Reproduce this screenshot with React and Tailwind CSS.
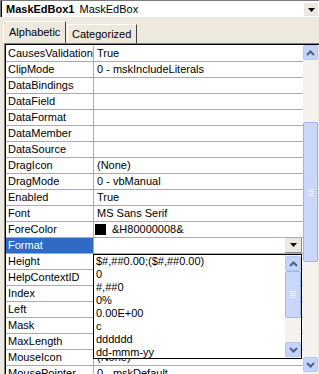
const rows = [
  ["CausesValidation", "True"],
  ["ClipMode", "0 - mskIncludeLiterals"],
  ["DataBindings", ""],
  ["DataField", ""],
  ["DataFormat", ""],
  ["DataMember", ""],
  ["DataSource", ""],
  ["DragIcon", "(None)"],
  ["DragMode", "0 - vbManual"],
  ["Enabled", "True"],
  ["Font", "MS Sans Serif"],
  ["ForeColor", "&H80000008&"],
  ["Format", ""],
  ["Height", ""],
  ["HelpContextID", ""],
  ["Index", ""],
  ["Left", ""],
  ["Mask", ""],
  ["MaxLength", ""],
  ["MouseIcon", "(None)"],
  ["MousePointer", "0 - mskDefault"],
];

const formats = [
  "$#,##0.00;($#,##0.00)",
  "0",
  "#,##0",
  "0%",
  "0.00E+00",
  "c",
  "dddddd",
  "dd-mmm-yy",
];

function DownTriangle() {
  return (
    <svg width="7" height="4" viewBox="0 0 7 4">
      <path d="M0 0h7L3.5 4z" fill="#000" />
    </svg>
  );
}

function Chevron({ up }) {
  return (
    <svg width="9" height="6" viewBox="0 0 9 6">
      <path
        d={up ? "M1 5L4.5 1.5 8 5" : "M1 1l3.5 3.5L8 1"}
        fill="none"
        stroke="#4d6185"
        strokeWidth="2"
      />
    </svg>
  );
}

function ScrollButton({ up, className = "" }) {
  return (
    <div
      className={`h-[15px] shrink-0 flex items-center justify-center rounded-[2px] border border-[#b4c8f6] bg-[#c4d4fc] ${className}`}
    >
      <Chevron up={up} />
    </div>
  );
}

function Thumb({ className = "" }) {
  return (
    <div
      className={`shrink-0 flex flex-col items-center justify-center gap-[1px] rounded-[2px] border border-[#9fb6ea] bg-[#c9d7fb] ${className}`}
    >
      <div className="w-[6px] h-[1px] bg-[#eef2fd]" />
      <div className="w-[6px] h-[1px] bg-[#eef2fd]" />
      <div className="w-[6px] h-[1px] bg-[#eef2fd]" />
      <div className="w-[6px] h-[1px] bg-[#eef2fd]" />
    </div>
  );
}

export default function App() {
  return (
    <div className="w-[319px] h-[374px] overflow-hidden bg-[#eee9df] text-[11px] text-black font-['Liberation_Sans',Arial,sans-serif] flex flex-col">
      {/* object combo */}
      <div className="h-[17px] shrink-0 flex border-t border-l border-[#7a7a7a] bg-white">
        <div className="flex-1 flex items-center border-l border-black pl-[4px] leading-none">
          <span className="font-bold">MaskEdBox1</span>
          <span className="ml-[5px]">MaskEdBox</span>
        </div>
        <div className="w-[14px] h-[13px] mt-[2px] mr-[1px] flex items-center justify-center bg-[#eee9df]">
          <DownTriangle />
        </div>
      </div>

      {/* tabs */}
      <div className="h-[26px] shrink-0 flex items-end pl-[3px]">
        <div className="h-[22px] w-[63px] pl-[5px] pt-[3px] border-t border-l border-white border-r border-r-[#404040] leading-[14px]">
          Alphabetic
        </div>
        <div className="h-[19px] w-[70px] ml-[1px] pl-[4px] pt-[2px] border-t border-l border-white border-r border-r-[#404040] leading-[14px]">
          Categorized
        </div>
      </div>

      {/* grid */}
      <div className="flex-1 min-h-0 flex ml-[4px] border-t border-l border-[#808080]">
        <div className="flex-1 min-h-0 flex border-t border-l border-black">
          <div className="relative w-[297px] bg-white pt-[1px]">
            {rows.map(([name, value]) => {
              const selected = name === "Format";
              return (
                <div
                  key={name}
                  className="h-[16px] shrink-0 flex border-b border-[#aca8b8] leading-[15px]"
                >
                  <div
                    className={`w-[88px] shrink-0 border-r border-[#aca8b8] pl-[2px] whitespace-nowrap overflow-hidden ${
                      selected ? "bg-[#316ac5] text-white" : ""
                    }`}
                  >
                    {name}
                  </div>
                  <div className="flex-1 flex items-center pl-[3px] pr-[1px] whitespace-nowrap overflow-hidden">
                    {name === "ForeColor" && (
                      <div className="w-[11px] h-[11px] bg-black mr-[6px] -ml-[2px]" />
                    )}
                    <span className="flex-1">{value}</span>
                    {selected && (
                      <div className="w-[17px] h-[15px] flex items-center justify-center bg-[#eee9df] border-r border-b border-[#8a8a8a]">
                        <DownTriangle />
                      </div>
                    )}
                  </div>
                </div>
              );
            })}

            {/* format dropdown list */}
            <div className="absolute left-[87px] top-[209px] w-[209px] h-[105px] flex bg-white border border-black">
              <div className="flex-1 pl-[2px]">
                {formats.map((f) => (
                  <div key={f} className="h-[13px] leading-[13px] whitespace-nowrap overflow-hidden">
                    {f}
                  </div>
                ))}
              </div>
              <div className="w-[16px] flex flex-col bg-[#f5f2ee] pt-[1px]">
                <ScrollButton up />
                <Thumb className="h-[47px]" />
                <div className="flex-1" />
                <ScrollButton />
                <div className="h-[1px]" />
              </div>
            </div>
          </div>

          {/* main scrollbar */}
          <div className="w-[15px] flex flex-col bg-[#f5f2ee]">
            <ScrollButton up />
            <div className="h-[62px] shrink-0" />
            <Thumb className="h-[140px]" />
            <div className="flex-1" />
            <ScrollButton />
            <div className="h-[2px] shrink-0" />
          </div>
        </div>
      </div>
    </div>
  );
}
